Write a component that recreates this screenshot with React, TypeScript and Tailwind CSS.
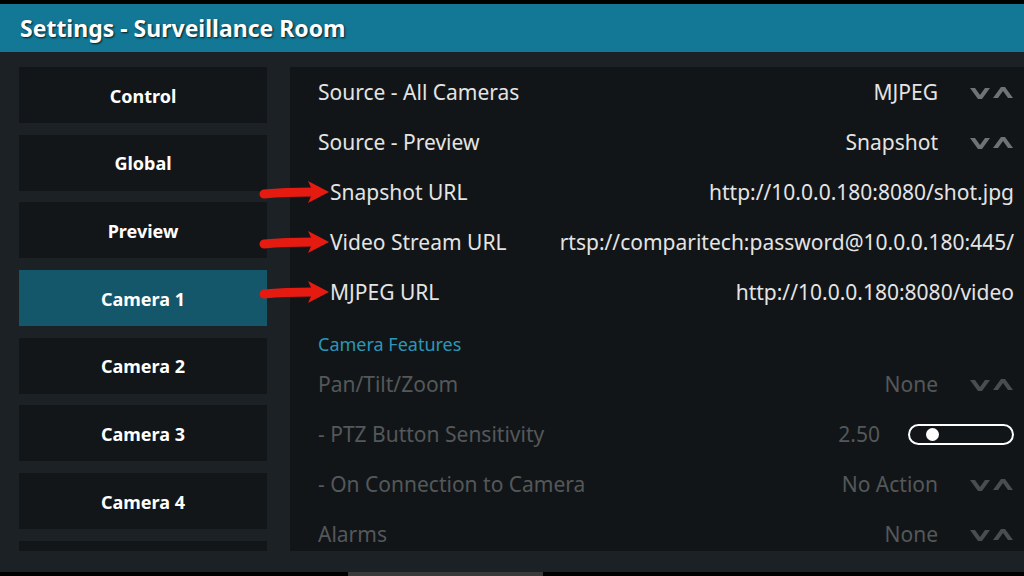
import React from "react";

const font = { fontFamily: '"Noto Sans", "Open Sans", sans-serif' };

function Spin({ dim }: { dim?: boolean }) {
  const c = dim ? "#4a4d4f" : "#6f7374";
  return (
    <svg width="44" height="14" viewBox="0 0 44 14" className="shrink-0">
      <polygon points="0,2 5,2 10,9 15,2 20,2 12,13 8,13" fill={c} />
      <polygon points="23,12 28,12 33,5 38,12 43,12 35,1 31,1" fill={c} />
    </svg>
  );
}

function Arrow() {
  return (
    <svg width="72" height="26" viewBox="0 0 72 26">
      <path d="M5 15 C 20 13.5, 40 13, 54 13" stroke="#e51b12" strokeWidth="9" strokeLinecap="round" fill="none" />
      <polygon points="49,2 70,13 49,24 54,13" fill="#e51b12" />
    </svg>
  );
}

type Row = {
  label: string;
  value?: string;
  kind: "spin" | "text" | "slider";
  dim?: boolean;
  arrow?: boolean;
};

const rows1: Row[] = [
  { label: "Source - All Cameras", value: "MJPEG", kind: "spin" },
  { label: "Source - Preview", value: "Snapshot", kind: "spin" },
  { label: "Snapshot URL", value: "http://10.0.0.180:8080/shot.jpg", kind: "text", arrow: true },
  { label: "Video Stream URL", value: "rtsp://comparitech:password@10.0.0.180:445/", kind: "text", arrow: true },
  { label: "MJPEG URL", value: "http://10.0.0.180:8080/video", kind: "text", arrow: true },
];

const rows2: Row[] = [
  { label: "Pan/Tilt/Zoom", value: "None", kind: "spin", dim: true },
  { label: "- PTZ Button Sensitivity", value: "2.50", kind: "slider", dim: true },
  { label: "- On Connection to Camera", value: "No Action", kind: "spin", dim: true },
  { label: "Alarms", value: "None", kind: "spin", dim: true },
];

function SettingRow({ r }: { r: Row }) {
  const color = r.dim ? "text-[#54585a]" : "text-[#e4e4e4]";
  return (
    <div className={`relative flex h-[50px] shrink-0 items-center pl-[28px] pr-[10px] pt-[1px] text-[21px] ${color}`}>
      {r.arrow && (
        <div className="absolute left-[-31px] top-[12px]">
          <Arrow />
        </div>
      )}
      <span className={r.arrow ? "pl-[12px]" : ""}>{r.label}</span>
      <div className="ml-auto flex items-center">
        {r.kind === "text" && <span>{r.value}</span>}
        {r.kind === "spin" && (
          <>
            <span className="mr-[32px]">{r.value}</span>
            <Spin dim={r.dim} />
          </>
        )}
        {r.kind === "slider" && (
          <>
            <span className="mr-[28px]">{r.value}</span>
            <div className="flex h-[21px] w-[106px] items-center rounded-full border-2 border-white pl-[16px]">
              <div className="h-[13px] w-[13px] rounded-full bg-white" />
            </div>
          </>
        )}
      </div>
    </div>
  );
}

const menu = ["Control", "Global", "Preview", "Camera 1", "Camera 2", "Camera 3", "Camera 4", ""];

export default function App() {
  return (
    <div className="flex h-[576px] w-[1024px] flex-col overflow-hidden bg-black" style={font}>
      <div className="h-[4px] shrink-0 bg-black" />
      <div className="flex h-[48px] shrink-0 items-center bg-[#137896] pl-[20px]">
        <span
          className="text-[23px] font-bold text-white"
          style={{ textShadow: "1px 1px 2px rgba(0,0,0,0.8)" }}
        >
          Settings - Surveillance Room
        </span>
      </div>
      <div className="flex h-[520px] shrink-0 gap-[23px] bg-[#1b2124] pb-[21px] pl-[19px] pt-[15px]">
        <div className="flex w-[248px] shrink-0 flex-col gap-[11.7px] overflow-hidden">
          {menu.map((m, i) => (
            <div
              key={i}
              className={`flex h-[56px] shrink-0 items-center justify-center pt-[2px] text-[18px] font-bold text-white ${
                m === "Camera 1" ? "bg-[#14566a]" : "bg-[#131618]"
              }`}
            >
              {m}
            </div>
          ))}
        </div>
        <div className="flex flex-1 flex-col overflow-visible bg-[#121517]">
          <div className="flex h-full flex-col">
            {rows1.map((r) => (
              <SettingRow key={r.label} r={r} />
            ))}
            <div className="flex h-[42px] shrink-0 items-center pl-[28px] pt-[12px] text-[18px] text-[#2a97b9]">
              Camera Features
            </div>
            <div className="flex flex-1 flex-col overflow-hidden">
              {rows2.map((r) => (
                <SettingRow key={r.label} r={r} />
              ))}
            </div>
          </div>
        </div>
      </div>
      <div className="flex h-[4px] shrink-0">
        <div className="ml-[348px] h-full w-[195px] bg-[#3a3a3a]" />
      </div>
    </div>
  );
}
